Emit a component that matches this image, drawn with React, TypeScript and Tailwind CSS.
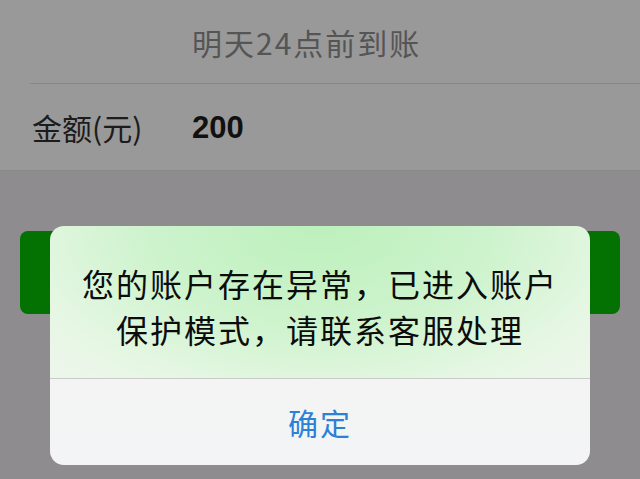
import React from 'react';

const cjk = '"Noto Sans CJK SC", "Noto Sans", sans-serif';

function App() {
  return (
    <div className="relative w-[640px] h-[479px] overflow-hidden bg-[#8e8c8f]" style={{ fontFamily: cjk }}>
      {/* form section */}
      <div className="h-[171px] bg-[#999999] border-b border-[#8a8a8a]">
        <div className="h-[83px] flex items-center pl-[192px]">
          <span className="text-[30px] leading-none tracking-[2px] text-[#555555]">明天24点前到账</span>
        </div>
        <div className="ml-[30px] h-px bg-[#878787]" />
        <div className="h-[86px] flex items-center pl-[32px]">
          <span className="w-[160px] text-[30px] leading-none text-[#1c1c1c]">金额(元)</span>
          <span className="text-[31px] leading-none font-bold text-[#111111]" style={{ fontFamily: '"Liberation Sans", sans-serif' }}>
            200
          </span>
        </div>
      </div>

      <div className="px-[20px] pt-[60px]">
        <div className="h-[83px] rounded-[8px] bg-[#037203]" />
      </div>

      {/* alert */}
      <div className="absolute left-[50px] top-[226px] w-[540px] h-[239px] rounded-[14px] overflow-hidden flex flex-col">
        <div className="h-[152px] flex flex-col items-center justify-center pt-[8px] bg-[radial-gradient(ellipse_at_50%_0%,#bdf0bd_0%,#cdf3cc_45%,#e6f7e4_80%,#eef6ec_100%)]">
          <p className="text-[32px] leading-[46px] tracking-[2px] text-[#0c0c0c]">您的账户存在异常，已进入账户</p>
          <p className="text-[32px] leading-[46px] tracking-[2px] text-[#0c0c0c]">保护模式，请联系客服处理</p>
        </div>
        <div className="h-px bg-[#c9cbc9]" />
        <div className="flex-1 flex items-center justify-center bg-gradient-to-b from-[#f3f4f3] to-[#f4f4f6]">
          <span className="text-[30px] leading-none tracking-[2px] text-[#2c80d6]">确定</span>
        </div>
      </div>
    </div>
  );
}

export default App;
